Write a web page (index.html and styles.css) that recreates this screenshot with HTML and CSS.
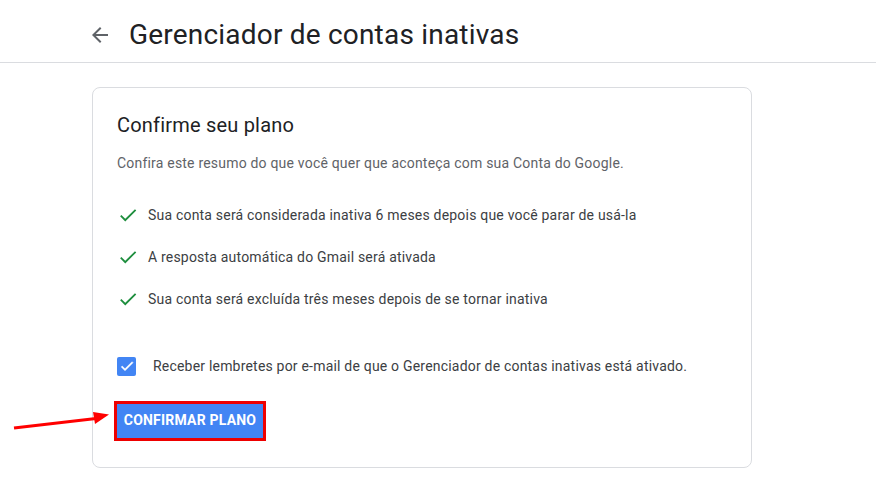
FILE: index.html
```html
<!DOCTYPE html>
<html lang="pt-BR">
<head>
<meta charset="utf-8">
<title>Gerenciador de contas inativas</title>
<link rel="stylesheet" href="styles.css">
</head>
<body>
<header class="topbar">
  <span class="back">
    <svg viewBox="0 0 24 24" width="24" height="24"><path d="M20 11H7.83l5.59-5.59L12 4l-8 8 8 8 1.41-1.41L7.83 13H20v-2z" fill="#5f6368"/></svg>
  </span>
  <h1 class="page-title">Gerenciador de contas inativas</h1>
</header>
<main class="content">
  <section class="card">
    <h2 class="card-title">Confirme seu plano</h2>
    <p class="card-sub">Confira este resumo do que você quer que aconteça com sua Conta do Google.</p>
    <ul class="items">
      <li class="item">
        <svg class="check" viewBox="0 0 24 24" width="22" height="22"><path d="M9 16.2L4.8 12l-1.4 1.4L9 19 21 7l-1.4-1.4L9 16.2z" fill="#1e8e3e"/></svg>
        <span>Sua conta será considerada inativa 6 meses depois que você parar de usá-la</span>
      </li>
      <li class="item">
        <svg class="check" viewBox="0 0 24 24" width="22" height="22"><path d="M9 16.2L4.8 12l-1.4 1.4L9 19 21 7l-1.4-1.4L9 16.2z" fill="#1e8e3e"/></svg>
        <span>A resposta automática do Gmail será ativada</span>
      </li>
      <li class="item">
        <svg class="check" viewBox="0 0 24 24" width="22" height="22"><path d="M9 16.2L4.8 12l-1.4 1.4L9 19 21 7l-1.4-1.4L9 16.2z" fill="#1e8e3e"/></svg>
        <span>Sua conta será excluída três meses depois de se tornar inativa</span>
      </li>
    </ul>
    <label class="opt">
      <span class="box">
        <svg viewBox="0 0 24 24" width="16" height="16"><path d="M9 16.2L4.8 12l-1.4 1.4L9 19 21 7l-1.4-1.4L9 16.2z" fill="#fff" stroke="#fff" stroke-width="0.8"/></svg>
      </span>
      <span class="opt-text">Receber lembretes por e-mail de que o Gerenciador de contas inativas está ativado.</span>
    </label>
    <button class="confirm">CONFIRMAR PLANO</button>
  </section>
</main>
<svg class="annot" width="120" height="30" viewBox="0 0 120 30">
  <line x1="14" y1="16" x2="96" y2="6.5" stroke="#f00" stroke-width="3"/>
  <polygon points="93,0 109,2.5 95,12" fill="#f00"/>
</svg>
</body>
</html>
```
FILE: styles.css
```css
html, body {
  margin: 0;
  padding: 0;
  background: #fff;
}
body {
  font-family: Roboto, "Liberation Sans", Arial, sans-serif;
  position: relative;
  width: 876px;
  height: 491px;
  overflow: hidden;
}
.topbar {
  display: flex;
  align-items: center;
  box-sizing: border-box;
  height: 63px;
  padding: 17px 0 9px 88px;
  border-bottom: 1px solid #dadce0;
}
.back {
  display: flex;
  width: 24px;
  height: 24px;
  margin-right: 17px;
}
.page-title {
  margin: 0;
  font-size: 28px;
  line-height: 36px;
  font-weight: 400;
  letter-spacing: 0.2px;
  color: #202124;
}
.content {
  padding: 24px 0 0 92px;
}
.card {
  box-sizing: border-box;
  width: 660px;
  height: 381px;
  border: 1px solid #dadce0;
  border-radius: 8px;
  padding: 23px 24px 0 24px;
}
.card-title {
  margin: 0;
  font-size: 20px;
  line-height: 28px;
  font-weight: 400;
  letter-spacing: 0.2px;
  color: #202124;
}
.card-sub {
  margin: 14px 0 0 0;
  font-size: 14px;
  line-height: 20px;
  letter-spacing: 0.2px;
  color: #5f6368;
}
.items {
  list-style: none;
  margin: 32px 0 0 0;
  padding: 0;
  display: flex;
  flex-direction: column;
  gap: 22px;
}
.item {
  display: flex;
  align-items: center;
  font-size: 14px;
  line-height: 20px;
  letter-spacing: 0.2px;
  color: #3c4043;
  height: 20px;
}
.check {
  margin-right: 9px;
  flex: none;
}
.opt {
  display: flex;
  align-items: center;
  margin-top: 47px;
  gap: 17px;
}
.box {
  box-sizing: border-box;
  width: 19px;
  height: 19px;
  border-radius: 2px;
  background: #4285f4;
  display: flex;
  align-items: center;
  justify-content: center;
}
.opt-text {
  font-size: 14px;
  line-height: 20px;
  letter-spacing: 0.2px;
  color: #3c4043;
}
.confirm {
  display: block;
  margin-top: 28px;
  box-sizing: border-box;
  width: 146px;
  height: 34px;
  padding: 0 0 3px 0;
  border: none;
  border-radius: 0;
  background: #4285f4;
  color: #fff;
  font-family: Roboto, "Liberation Sans", Arial, sans-serif;
  font-size: 14px;
  font-weight: 700;
  letter-spacing: 0.2px;
  outline: 3px solid #ee0000;
  outline-offset: 0;
}
.annot {
  position: absolute;
  left: 0;
  top: 412px;
}
```
